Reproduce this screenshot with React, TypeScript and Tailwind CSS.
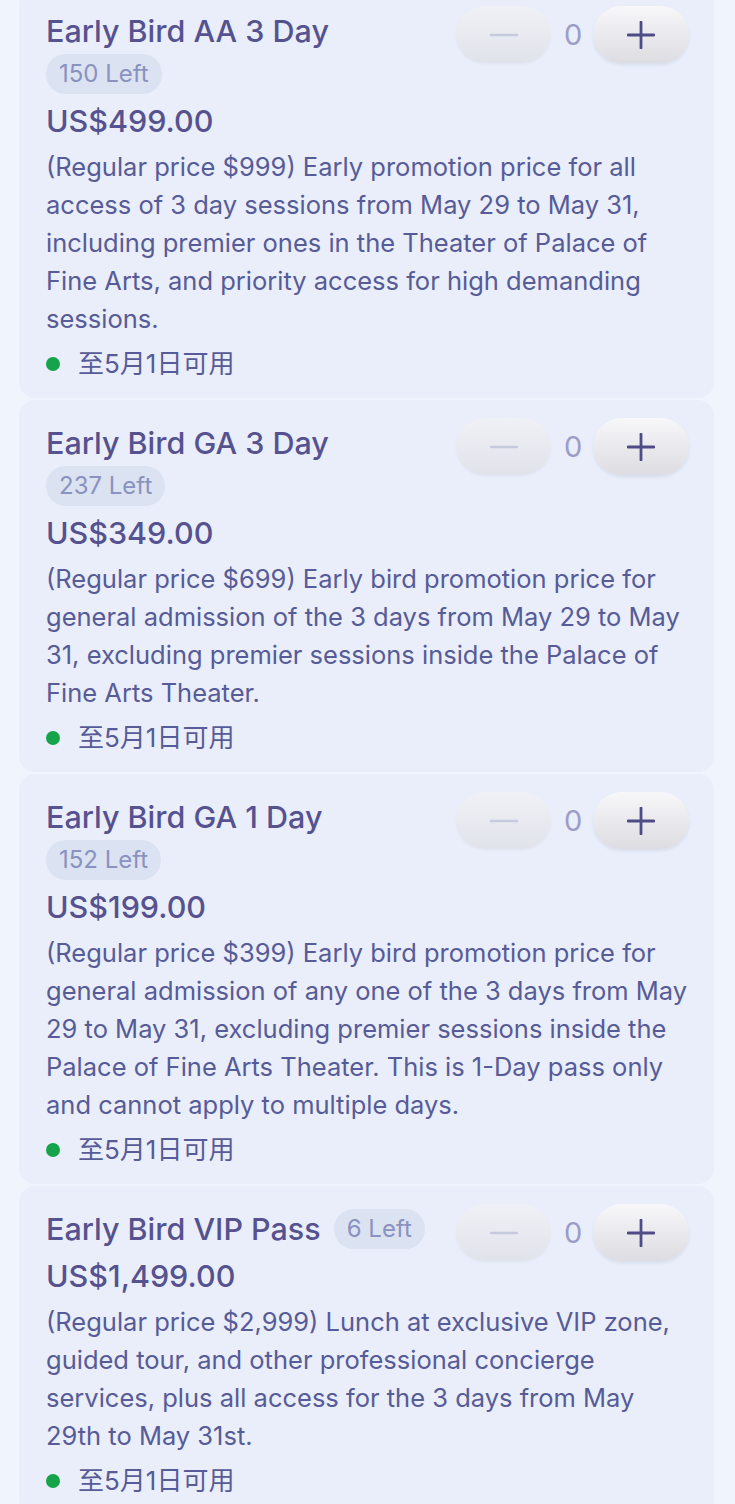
import React from "react";

type Ticket = {
  title: string;
  left: string;
  price: string;
  desc: string;
};

const tickets: Ticket[] = [
  {
    title: "Early Bird AA 3 Day",
    left: "150 Left",
    price: "US$499.00",
    desc: "(Regular price $999) Early promotion price for all access of 3 day sessions from May 29 to May 31, including premier ones in the Theater of Palace of Fine Arts, and priority access for high demanding sessions.",
  },
  {
    title: "Early Bird GA 3 Day",
    left: "237 Left",
    price: "US$349.00",
    desc: "(Regular price $699) Early bird promotion price for general admission of the 3 days from May 29 to May 31, excluding premier sessions inside the Palace of Fine Arts Theater.",
  },
  {
    title: "Early Bird GA 1 Day",
    left: "152 Left",
    price: "US$199.00",
    desc: "(Regular price $399) Early bird promotion price for general admission of any one of the 3 days from May 29 to May 31, excluding premier sessions inside the Palace of Fine Arts Theater. This is 1-Day pass only and cannot apply to multiple days.",
  },
  {
    title: "Early Bird VIP Pass",
    left: "6 Left",
    price: "US$1,499.00",
    desc: "(Regular price $2,999) Lunch at exclusive VIP zone, guided tour, and other professional concierge services, plus all access for the 3 days from May 29th to May 31st.",
  },
];

function Stepper() {
  return (
    <div className="flex items-center gap-[13px] shrink-0">
      <button className="w-[95px] h-[57px] rounded-full bg-gradient-to-b from-[#f0f1f6] to-[#e1e3eb] shadow-[0_1px_2px_rgba(120,125,160,0.08)] flex items-center justify-center">
        <svg width="28" height="28" viewBox="0 0 28 28">
          <line x1="1" y1="14" x2="27" y2="14" stroke="#c6cadd" strokeWidth="2.6" strokeLinecap="round" />
        </svg>
      </button>
      <span className="text-[29px] leading-none text-[#9d9cc8] w-[16px] text-center">0</span>
      <button className="w-[96px] h-[57px] rounded-full bg-gradient-to-b from-[#f8f8fa] to-[#dcdce2] shadow-[0_2px_3px_rgba(110,110,140,0.12)] flex items-center justify-center">
        <svg width="28" height="28" viewBox="0 0 28 28">
          <line x1="1" y1="14" x2="27" y2="14" stroke="#4f4b86" strokeWidth="2.8" strokeLinecap="round" />
          <line x1="14" y1="1" x2="14" y2="27" stroke="#4f4b86" strokeWidth="2.8" strokeLinecap="round" />
        </svg>
      </button>
    </div>
  );
}

function Card({ t }: { t: Ticket }) {
  return (
    <div className="bg-[#e9eefa] rounded-[16px] pt-[18px] pb-[17px] pl-[27px] pr-[25px]">
      <div className="flex items-start justify-between">
        <div className="flex-1 pt-[5px] mr-[8px]">
          <div className="flex flex-wrap items-center gap-x-[13px] gap-y-[3px]">
            <span className="text-[30.5px] leading-[40px] font-medium text-[#55528f] whitespace-nowrap">{t.title}</span>
            <span className="h-[40px] px-[13px] rounded-full bg-[#dbe2f1] text-[24px] leading-[40px] text-[#8a92bf] whitespace-nowrap">{t.left}</span>
          </div>
          <div className="mt-[10px] text-[30.5px] leading-[34px] font-medium text-[#55528f]">{t.price}</div>
        </div>
        <Stepper />
      </div>
      <p className="mt-[10px] text-[25.5px] leading-[38px] text-[#575b97]">{t.desc}</p>
      <div className="mt-[9px] flex items-center h-[34px]">
        <span className="w-[14px] h-[14px] rounded-full bg-[#16a34a]" />
        <span className="ml-[18px] text-[26px] leading-[34px] text-[#575b97]">至5月1日可用</span>
      </div>
    </div>
  );
}

export default function App() {
  return (
    <div
      className="w-[735px] h-[1504px] overflow-hidden bg-[#eff4fd]"
      style={{ fontFamily: 'Inter, "Noto Sans CJK SC", sans-serif' }}
    >
      <div className="-mt-[12px] ml-[19px] w-[695px] flex flex-col gap-[2px]">
        {tickets.map((t) => (
          <Card key={t.title} t={t} />
        ))}
      </div>
    </div>
  );
}
